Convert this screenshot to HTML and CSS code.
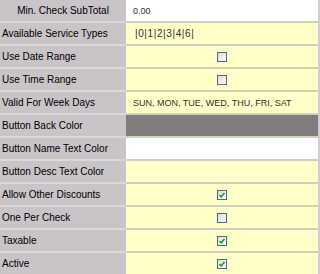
FILE: index.html
```html
<!DOCTYPE html>
<html lang="en">
  <head>
    <meta charset="UTF-8" />
    <meta name="viewport" content="width=device-width, initial-scale=1.0" />
    <title>Check Settings</title>
    <link rel="stylesheet" href="styles.css">
  </head>
  <body>
    <table class="props">
      <tr>
        <td class="label center">Min. Check SubTotal</td>
        <td class="value white">0.00</td>
      </tr>
      <tr>
        <td class="label">Available Service Types</td>
        <td class="value types">|0|1|2|3|4|6|</td>
      </tr>
      <tr>
        <td class="label">Use Date Range</td>
        <td class="value check"><span class="cb"></span></td>
      </tr>
      <tr>
        <td class="label">Use Time Range</td>
        <td class="value check"><span class="cb"></span></td>
      </tr>
      <tr>
        <td class="label">Valid For Week Days</td>
        <td class="value">SUN, MON, TUE, WED, THU, FRI, SAT</td>
      </tr>
      <tr>
        <td class="label">Button Back Color</td>
        <td class="value dark"></td>
      </tr>
      <tr>
        <td class="label">Button Name Text Color</td>
        <td class="value white"></td>
      </tr>
      <tr>
        <td class="label">Button Desc Text Color</td>
        <td class="value"></td>
      </tr>
      <tr>
        <td class="label">Allow Other Discounts</td>
        <td class="value check">
          <span class="cb"><svg viewBox="0 0 8 8"><path d="M1.5 4 L3.2 5.8 L6.5 2" /></svg></span>
        </td>
      </tr>
      <tr>
        <td class="label">One Per Check</td>
        <td class="value check"><span class="cb"></span></td>
      </tr>
      <tr>
        <td class="label">Taxable</td>
        <td class="value check">
          <span class="cb"><svg viewBox="0 0 8 8"><path d="M1.5 4 L3.2 5.8 L6.5 2" /></svg></span>
        </td>
      </tr>
      <tr>
        <td class="label">Active</td>
        <td class="value check">
          <span class="cb"><svg viewBox="0 0 8 8"><path d="M1.5 4 L3.2 5.8 L6.5 2" /></svg></span>
        </td>
      </tr>
    </table>
  </body>
</html>
```

FILE: styles.css
```css
body {
  margin: 0;
  padding: 0;
  background-color: #fff;
  font-family: "Liberation Sans", Arial, sans-serif;
  font-size: 9px;
}

.props {
  width: 320px;
  border-collapse: collapse;
}

.props td {
  height: 21px;
  padding: 0;
  border-bottom: 2px solid #d4d0bc;
  box-sizing: content-box;
  white-space: nowrap;
}

.label {
  width: 124px;
  padding-left: 2px !important;
  background-color: #c8c4c8;
  color: #000;
  font-size: 10px;
  border-bottom-color: #dcd8d4 !important;
}

.label.center {
  text-align: center;
  padding-left: 0 !important;
}

.value {
  padding-left: 7px !important;
  background-color: #ffffc8;
  color: #303030;
  border-right: 2px solid #d0ccd8;
}

.value.types {
  padding-left: 9px !important;
  font-size: 10px;
  letter-spacing: 0.6px;
}

.value.white {
  background-color: #fff;
}

.value.dark {
  background-color: #807c80;
}

.value.check {
  text-align: center;
  padding-left: 0 !important;
}

.cb {
  display: inline-block;
  width: 8px;
  height: 8px;
  vertical-align: middle;
  border: 1px solid #4c6c8c;
  background: linear-gradient(135deg, #dcdcd8, #ffffff);
}

.cb svg {
  display: block;
  width: 8px;
  height: 8px;
  fill: none;
  stroke: #20a020;
  stroke-width: 1.6;
}
```
